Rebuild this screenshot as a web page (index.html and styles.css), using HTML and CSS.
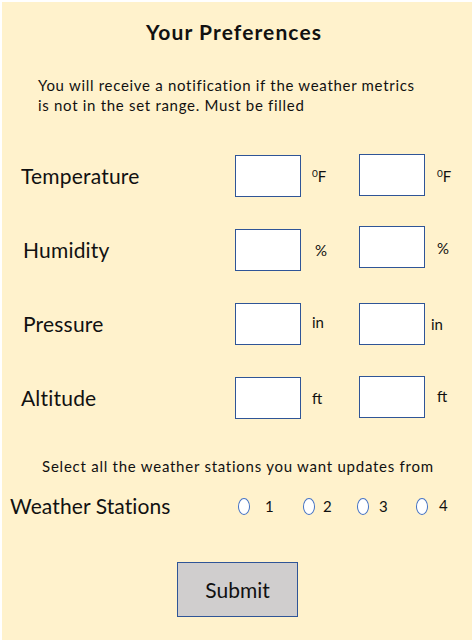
FILE: index.html
```html
<!DOCTYPE html>
<html lang="en">
<head>
<meta charset="utf-8">
<title>Your Preferences</title>
<link rel="stylesheet" href="styles.css">
</head>
<body>
<main class="card">
  <h1 class="title">Your Preferences</h1>
  <p class="intro">You will receive a notification if the weather metrics<br>is not in the set range. Must be filled</p>

  <div class="metrics">
    <div class="metric">
      <span class="label">Temperature</span>
      <span class="box"></span>
      <span class="unit"><sup>0</sup>F</span>
      <span class="box up-1"></span>
      <span class="unit"><sup>0</sup>F</span>
    </div>
    <div class="metric">
      <span class="label indent">Humidity</span>
      <span class="box"></span>
      <span class="unit wide">%</span>
      <span class="box up-3"></span>
      <span class="unit up">%</span>
    </div>
    <div class="metric">
      <span class="label indent">Pressure</span>
      <span class="box"></span>
      <span class="unit up">in</span>
      <span class="box"></span>
      <span class="unit near">in</span>
    </div>
    <div class="metric">
      <span class="label">Altitude</span>
      <span class="box"></span>
      <span class="unit">ft</span>
      <span class="box up-1"></span>
      <span class="unit up">ft</span>
    </div>
  </div>

  <p class="note">Select all the weather stations you want updates from</p>

  <div class="stations">
    <span class="stations-label">Weather Stations</span>
    <div class="options">
      <label class="option"><span class="radio"></span><span class="num">1</span></label>
      <label class="option"><span class="radio"></span><span class="num">2</span></label>
      <label class="option"><span class="radio"></span><span class="num">3</span></label>
      <label class="option"><span class="radio"></span><span class="num">4</span></label>
    </div>
  </div>

  <div class="actions">
    <button class="submit" type="button">Submit</button>
  </div>
</main>
</body>
</html>
```

FILE: styles.css
```css
* { box-sizing: border-box; }

html, body {
  margin: 0;
  padding: 0;
  background: #ffffff;
}

body {
  font-family: "Lato", "Open Sans", sans-serif;
  color: #111111;
}

.card {
  width: 470px;
  height: 638px;
  margin: 2px 3px 4px 2px;
  background: #FFF2CC;
  padding-top: 17px;
  display: flex;
  flex-direction: column;
}

.title {
  margin: 0;
  font-size: 21px;
  line-height: 26px;
  font-weight: 700;
  letter-spacing: 1.1px;
  text-align: center;
  padding-right: 6px;
}

.intro {
  margin: 30px 0 0 36px;
  font-size: 15px;
  line-height: 20px;
  letter-spacing: 0.7px;
}

.metrics {
  margin-top: 40px;
  display: flex;
  flex-direction: column;
  gap: 32px;
}

.metric {
  display: grid;
  grid-template-columns: 214px 66px 58px 66px auto;
  align-items: center;
  padding-left: 19px;
  height: 42px;
}

.label {
  font-size: 21px;
  line-height: 24px;
  letter-spacing: 0.2px;
}

.label.indent { padding-left: 2px; }

.box {
  align-self: start;
  height: 42px;
  background: #ffffff;
  border: 1.5px solid #2F5597;
}

.box.up-1 { margin-top: -1px; }
.box.up-3 { margin-top: -3px; }

.unit {
  font-size: 15px;
  line-height: 18px;
  padding-left: 11px;
}

.metric .unit:last-child { padding-left: 12px; }
.metric .unit.wide { padding-left: 14px; }
.metric .unit.near { padding-left: 6px; }
.unit.up { margin-top: -4px; }

.unit sup {
  font-size: 10px;
  vertical-align: 5px;
  line-height: 0;
}

.note {
  margin: 37px 0 0 0;
  font-size: 15px;
  line-height: 20px;
  letter-spacing: 0.75px;
  text-align: center;
  padding-left: 2px;
}

.stations {
  margin-top: 18px;
  display: flex;
  align-items: center;
  padding-left: 8px;
}

.stations-label {
  font-size: 21px;
  line-height: 24px;
  letter-spacing: 0.1px;
  width: 228px;
}

.options {
  display: grid;
  grid-template-columns: 65px 54px 59px auto;
}

.option {
  display: flex;
  align-items: center;
}

.radio {
  width: 12px;
  height: 17px;
  border: 1.5px solid #4472C4;
  background: #ffffff;
  border-radius: 50%;
}

.num {
  font-size: 15px;
  line-height: 18px;
  margin-left: 15px;
}

.option:nth-child(2) .num { margin-left: 8px; }
.option:nth-child(3) .num { margin-left: 10px; }
.option:nth-child(4) .num { margin-left: 11px; margin-top: -3px; }

.actions {
  margin-top: 44px;
  display: flex;
  justify-content: center;
  padding-left: 1px;
}

.submit {
  width: 121px;
  height: 55px;
  background: #D0CECE;
  border: 1.5px solid #2F5597;
  border-radius: 0;
  font-family: "Lato", "Open Sans", sans-serif;
  font-size: 21px;
  color: #111111;
  padding: 0;
}
```
